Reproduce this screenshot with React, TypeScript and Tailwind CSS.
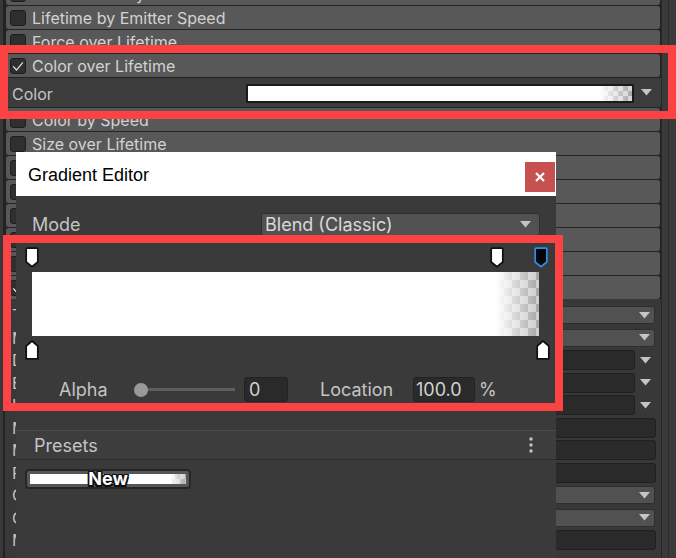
import React from "react";

const TOP_ROWS: { label: string; checked?: boolean }[] = [
  { label: "Inherit Velocity" },
  { label: "Lifetime by Emitter Speed" },
  { label: "Force over Lifetime" },
  { label: "Color over Lifetime", checked: true },
];

const BOTTOM_ROWS: { label: string; checked?: boolean }[] = [
  { label: "Color by Speed" },
  { label: "Size over Lifetime" },
  { label: "Size by Speed" },
  { label: "Rotation over Lifetime" },
  { label: "Rotation by Speed" },
  { label: "External Forces" },
  { label: "Noise" },
  { label: "Collision", checked: true },
];

type Prop = { label: string; kind: "dropdown" | "curve" | "field" };
const PROPS: Prop[] = [
  { label: "Type", kind: "dropdown" },
  { label: "Mode", kind: "dropdown" },
  { label: "Dampen", kind: "curve" },
  { label: "Bounce", kind: "curve" },
  { label: "Lifetime Loss", kind: "curve" },
  { label: "Min Kill Speed", kind: "field" },
  { label: "Max Kill Speed", kind: "field" },
  { label: "Radius Scale", kind: "field" },
  { label: "Collision Quality", kind: "dropdown" },
  { label: "Collides With", kind: "dropdown" },
  { label: "Max Collision Shapes", kind: "field" },
];

const TOP_KEYS = [
  { x: -7, selected: false },
  { x: 458, selected: false },
  { x: 502, selected: true },
];
const BOTTOM_KEYS = [{ x: -7 }, { x: 504 }];

function Arrow() {
  return (
    <svg width="11" height="7" viewBox="0 0 11 7" className="shrink-0">
      <path d="M0 0 H11 L5.5 6.5 Z" fill="#c4c4c4" />
    </svg>
  );
}

function Check({ checked }: { checked?: boolean }) {
  return (
    <div className="w-[16px] h-[16px] shrink-0 rounded-[3px] bg-[#2f2f2f] border border-[#1e1e1e] flex items-center justify-center">
      {checked && (
        <svg width="16" height="16" viewBox="0 0 16 16">
          <path d="M2.5 8.5 L6.3 12.6 L13.6 3.8" stroke="#e4e4e4" strokeWidth="1.4" fill="none" />
        </svg>
      )}
    </div>
  );
}

function HeaderRow({ label, checked }: { label: string; checked?: boolean }) {
  return (
    <div className="h-[23px] mx-px rounded-[3px] bg-[#585858] flex items-center pl-[4px] gap-[6px] text-[16px] text-[#d2d2d2] whitespace-nowrap overflow-hidden">
      <Check checked={checked} />
      <span>{label}</span>
    </div>
  );
}

function TopKey({ selected }: { selected?: boolean }) {
  return (
    <svg width="14" height="21" viewBox="0 0 14 21">
      <path
        d="M1.2 2 Q1.2 1.2 2 1.2 H12 Q12.8 1.2 12.8 2 V15 L7 19.6 L1.2 15 Z"
        fill={selected ? "#050505" : "#ffffff"}
        stroke={selected ? "#2d8ef2" : "#101010"}
        strokeWidth="1.7"
      />
    </svg>
  );
}

function BottomKey() {
  return (
    <svg width="14" height="20" viewBox="0 0 14 20">
      <path d="M7 1 L12.8 6 V18.8 H1.2 V6 Z" fill="#ffffff" stroke="#101010" strokeWidth="1.7" />
    </svg>
  );
}

function PropRow({ p }: { p: Prop }) {
  return (
    <div className="h-[22.5px] flex items-center">
      <span className="pl-[7px] w-[240px] shrink-0 text-[16px] text-[#c4c4c4] whitespace-nowrap overflow-hidden">
        {p.label}
      </span>
      {p.kind === "dropdown" && (
        <div className="flex-1 mr-[6px] h-[18px] rounded-[3px] bg-[#515151] border border-[#2e2e2e] flex items-center justify-end pr-[4px]">
          <Arrow />
        </div>
      )}
      {p.kind === "curve" && (
        <div className="flex-1 flex items-center mr-[5px]">
          <div className="flex-1 h-[20px] rounded-[3px] bg-[#2a2a2a] border border-[#202020]" />
          <div className="w-[21px] flex justify-center">
            <Arrow />
          </div>
        </div>
      )}
      {p.kind === "field" && (
        <div className="flex-1 mr-[5px] h-[20px] rounded-[3px] bg-[#2a2a2a] border border-[#202020]" />
      )}
    </div>
  );
}

function Dialog() {
  return (
    <div className="absolute left-[16px] top-[152px] w-[540px] h-[406px] flex flex-col bg-[#3a3a3a]">
      <div className="h-[44px] shrink-0 bg-white flex items-start justify-between">
        <span className="pl-[12px] pt-[12px] text-[18px] leading-[22px] text-[#000] font-['Liberation_Sans',Arial,sans-serif]">
          Gradient Editor
        </span>
        <div className="mt-[10px] mr-px w-[30px] h-[30px] bg-[#c75050] flex items-center justify-center">
          <svg width="10" height="10" viewBox="0 0 10 10">
            <path d="M1 1 L9 9 M9 1 L1 9" stroke="#ffffff" strokeWidth="2.2" />
          </svg>
        </div>
      </div>

      <div className="flex flex-col px-[16px]">
        <div className="mt-[17px] h-[23px] flex items-center">
          <span className="w-[229px] shrink-0 text-[18px] text-[#c4c4c4]">Mode</span>
          <div className="flex-1 h-full rounded-[3px] bg-[#515151] border border-[#2f2f2f] flex items-center justify-between pl-[3px] pr-[8px]">
            <span className="text-[18px] text-[#dadada] leading-none">Blend (Classic)</span>
            <Arrow />
          </div>
        </div>

        <div className="relative mt-[11px] h-[21px] w-[507px]">
          {TOP_KEYS.map((k, i) => (
            <div key={i} className="absolute top-0" style={{ left: k.x }}>
              <TopKey selected={k.selected} />
            </div>
          ))}
        </div>
        <div className="mt-[4px] h-[64px] w-[507px] bg-[linear-gradient(to_right,#ffffff_91.5%,#ffffff00),repeating-conic-gradient(#a6a6a6_0_25%,#cdcdcd_0_50%)] bg-[length:100%_100%,16px_16px]" />
        <div className="relative mt-[4px] h-[20px] w-[507px]">
          {BOTTOM_KEYS.map((k, i) => (
            <div key={i} className="absolute top-0" style={{ left: k.x }}>
              <BottomKey />
            </div>
          ))}
        </div>

        <div className="mt-[17px] h-[25px] flex items-center pl-[27px]">
          <span className="w-[75px] shrink-0 text-[18px] text-[#c4c4c4]">Alpha</span>
          <div className="relative w-[101px] h-[14px] flex items-center shrink-0">
            <div className="ml-[7px] flex-1 h-[3px] bg-[#5e5e5e]" />
            <div className="absolute left-0 top-0 w-[14px] h-[14px] rounded-full bg-[#999999]" />
          </div>
          <div className="ml-[9px] w-[44px] h-[25px] shrink-0 rounded-[3px] bg-[#2a2a2a] border border-[#222] flex items-center pl-[4px] text-[18px] text-[#d2d2d2]">
            0
          </div>
          <span className="ml-[32px] w-[93px] shrink-0 text-[18px] text-[#c4c4c4]">Location</span>
          <div className="w-[62px] h-[25px] shrink-0 rounded-[3px] bg-[#2a2a2a] border border-[#222] flex items-center pl-[2px] text-[18px] text-[#d2d2d2]">
            100.0
          </div>
          <span className="ml-[4px] text-[18px] text-[#c4c4c4]">%</span>
        </div>
      </div>

      <div className="mt-[28px] border-t border-[#4c4c4c] h-[30px] bg-[#3d3d3d] border-b border-b-[#2a2a2a] flex items-center justify-between pl-[18px] pr-[23px]">
        <span className="text-[18px] text-[#c4c4c4]">Presets</span>
        <svg width="4" height="16" viewBox="0 0 4 16">
          <circle cx="2" cy="2" r="1.7" fill="#c4c4c4" />
          <circle cx="2" cy="8" r="1.7" fill="#c4c4c4" />
          <circle cx="2" cy="14" r="1.7" fill="#c4c4c4" />
        </svg>
      </div>

      <div className="relative mt-[9px] ml-[9px] w-[166px] h-[20px] rounded-[4px] border-2 border-[#262626] bg-[#565656] px-[3px] py-[3px]">
        <div className="h-full w-full bg-[linear-gradient(to_right,#ffffff_90%,#ffffff00),repeating-conic-gradient(#a6a6a6_0_25%,#cdcdcd_0_50%)] bg-[length:100%_100%,10px_10px]" />
        <span className="absolute inset-0 flex items-center justify-center text-[18px] font-bold text-white leading-none [text-shadow:-1.5px_-1.5px_0_#111,1.5px_-1.5px_0_#111,-1.5px_1.5px_0_#111,1.5px_1.5px_0_#111,0_1.5px_0_#111,0_-1.5px_0_#111,1.5px_0_0_#111,-1.5px_0_0_#111]">
          New
        </span>
      </div>
    </div>
  );
}

export default function App() {
  return (
    <div className="relative w-[676px] h-[558px] overflow-hidden bg-[#383838] font-['Inter','Noto_Sans',sans-serif]">
      <div className="flex h-full">
        <div className="w-[3px] shrink-0" />
        <div className="w-[2px] shrink-0 bg-[#232323]" />
        <div className="flex-1 min-w-0 flex flex-col">
          <div className="-mt-[18px] flex flex-col gap-px bg-[#242424]">
            {TOP_ROWS.map((r) => (
              <HeaderRow key={r.label} label={r.label} checked={r.checked} />
            ))}
            <div className="h-[29px] bg-[#3c3c3c] flex items-center">
              <span className="pl-[7px] pt-[2px] w-[241px] shrink-0 text-[16px] text-[#c4c4c4]">Color</span>
              <div className="w-[388px] h-[19px] mt-[1px] border-2 border-[#1b1b1b] bg-[#1b1b1b]">
                <div className="h-full w-full bg-[linear-gradient(to_right,#ffffff_91.5%,#ffffff00),repeating-conic-gradient(#a6a6a6_0_25%,#d4d4d4_0_50%)] bg-[length:100%_100%,10px_10px]" />
              </div>
              <div className="ml-[7px]">
                <Arrow />
              </div>
            </div>
            {BOTTOM_ROWS.map((r) => (
              <HeaderRow key={r.label} label={r.label} checked={r.checked} />
            ))}
          </div>
          <div className="flex flex-col pt-[5px]">
            {PROPS.map((p) => (
              <PropRow key={p.label} p={p} />
            ))}
          </div>
        </div>
        <div className="w-[15px] shrink-0 bg-[#3a3a3a] border-l border-[#262626] flex">
          <div className="ml-[6px] w-px bg-[#2c2c2c]" />
        </div>
      </div>

      <Dialog />

      <div className="absolute left-0 top-[45px] w-[676px] h-[74px] border-[8px] border-[#fc4343]" />
      <div className="absolute left-[3px] top-[235px] w-[560px] h-[176px] border-[8px] border-[#fc4343]" />
    </div>
  );
}
